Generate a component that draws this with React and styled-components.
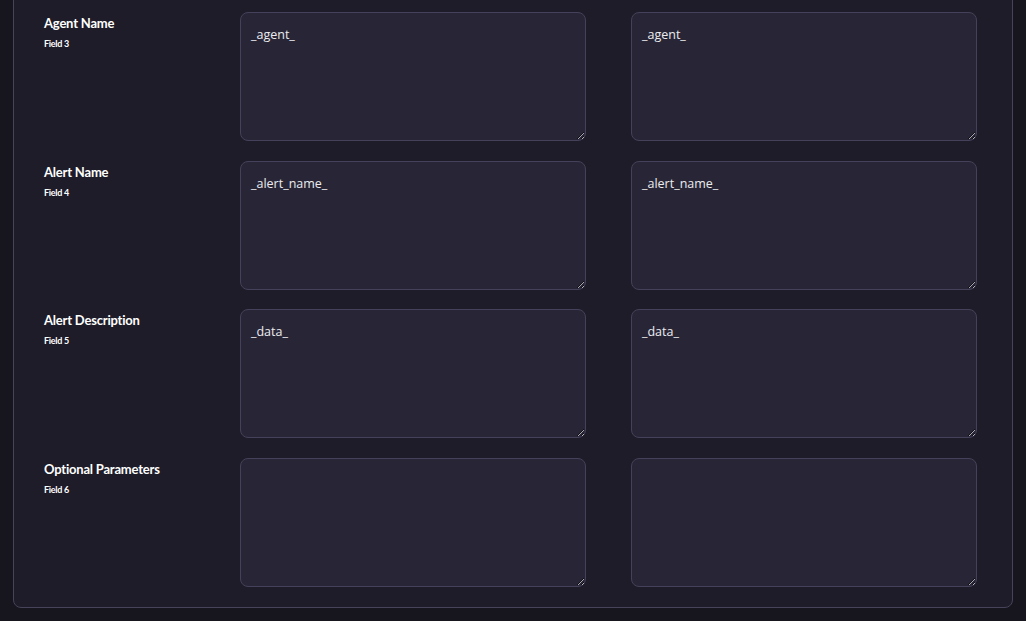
import React from "react";
import styled, { createGlobalStyle } from "styled-components";

const fields = [
  { label: "Agent Name", field: "Field 3", value: "_agent_" },
  { label: "Alert Name", field: "Field 4", value: "_alert_name_" },
  { label: "Alert Description", field: "Field 5", value: "_data_" },
  { label: "Optional Parameters", field: "Field 6", value: "" },
];

const App = () => {
  return (
    <>
      <GlobalStyle />
      <Page>
        <Panel>
          {fields.map((f) => (
            <Row key={f.field}>
              <Label>
                <h4>{f.label}</h4>
                <span>{f.field}</span>
              </Label>
              <TextBox defaultValue={f.value} />
              <TextBox defaultValue={f.value} />
            </Row>
          ))}
        </Panel>
      </Page>
    </>
  );
};

export default App;

const GlobalStyle = createGlobalStyle`
  html, body {
    margin: 0;
    padding: 0;
    background: #17151e;
    overflow: hidden;
  }
`;

const Page = styled.div`
  width: 1026px;
  height: 621px;
  padding: 0 13px;
  box-sizing: border-box;
  background: #17151e;
  overflow: hidden;
`;

const Panel = styled.div`
  margin-top: -11px;
  padding: 22px 34px 20px 30px;
  background: #1e1c28;
  border: 1px solid #47435a;
  border-radius: 8px;
  display: flex;
  flex-direction: column;
  gap: 19.7px;
`;

const Row = styled.div`
  display: grid;
  grid-template-columns: 151px 346px 346px;
  column-gap: 45px;
`;

const Label = styled.div`
  padding-top: 3px;
  font-family: Lato, "Liberation Sans", sans-serif;
  color: #ffffff;

  h4 {
    margin: 0;
    font-size: 13px;
    font-weight: 700;
    letter-spacing: -0.2px;
    line-height: 16px;
  }

  span {
    display: block;
    margin-top: 7px;
    font-size: 9px;
    font-weight: 700;
    letter-spacing: -0.3px;
  }
`;

const TextBox = styled.textarea`
  height: 129px;
  box-sizing: border-box;
  padding: 12px 10px;
  background: #282636;
  border: 1px solid #45415a;
  border-radius: 8px;
  color: #ececf0;
  font-family: "Open Sans", "Liberation Sans", sans-serif;
  font-size: 12.5px;
  line-height: 20px;
  color-scheme: dark;
  outline: none;
  resize: vertical;
`;
